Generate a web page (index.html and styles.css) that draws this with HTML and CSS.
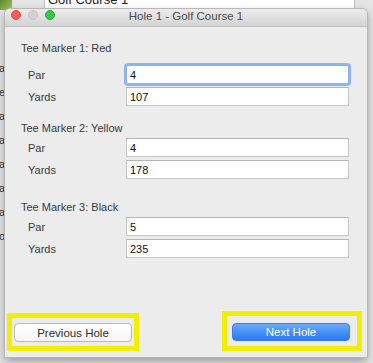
FILE: index.html
```html
<!DOCTYPE html>
<html lang="en">
<head>
  <meta charset="UTF-8" />
  <title>Hole 1 - Golf Course 1</title>
  <link rel="stylesheet" href="styles.css">
</head>
<body>
  <div class="desktop">
    <!-- window behind -->
    <div class="back-thumb"></div>
    <div class="back-field">Golf Course 1</div>
    <div class="back-labels">
      <span>a</span><span>e</span><span>a</span><span>a</span><span>la</span><span>a</span><span>a</span><span>o</span>
    </div>

    <!-- dialog -->
    <div class="window">
      <div class="titlebar">
        <div class="lights">
          <span class="light red"></span>
          <span class="light grey"></span>
          <span class="light green"></span>
        </div>
        <div class="title">Hole 1 - Golf Course 1</div>
      </div>

      <div class="content">
        <div class="group first">
          <div class="group-title">Tee Marker 1: Red</div>
          <div class="row">
            <span class="label">Par</span>
            <input class="field focused" type="text" value="4" />
          </div>
          <div class="row">
            <span class="label">Yards</span>
            <input class="field" type="text" value="107" />
          </div>
        </div>

        <div class="group second">
          <div class="group-title">Tee Marker 2: Yellow</div>
          <div class="row">
            <span class="label">Par</span>
            <input class="field" type="text" value="4" />
          </div>
          <div class="row">
            <span class="label">Yards</span>
            <input class="field" type="text" value="178" />
          </div>
        </div>

        <div class="group third">
          <div class="group-title">Tee Marker 3: Black</div>
          <div class="row">
            <span class="label">Par</span>
            <input class="field" type="text" value="5" />
          </div>
          <div class="row">
            <span class="label">Yards</span>
            <input class="field" type="text" value="235" />
          </div>
        </div>

        <div class="actions">
          <div class="highlight left">
            <button class="btn">Previous Hole</button>
          </div>
          <div class="highlight right">
            <button class="btn primary">Next Hole</button>
          </div>
        </div>
      </div>
    </div>
  </div>
</body>
</html>
```

FILE: styles.css
```css
body {
  margin: 0;
  background-color: #9c9c9c;
  font-family: 'Liberation Sans', Arial, sans-serif;
  font-size: 11px;
  color: #333;
  overflow: hidden;
}

.desktop {
  position: relative;
  width: 373px;
  height: 363px;
  background-color: #e4e4e4;
  overflow: hidden;
}

/* window in the back */
.back-thumb {
  position: absolute;
  left: 0;
  top: 0;
  width: 12px;
  height: 10px;
  background: linear-gradient(135deg, #5b8a2e, #a7c45a);
}

.back-field {
  position: absolute;
  left: 44px;
  top: -9px;
  width: 306px;
  height: 16px;
  padding-left: 3px;
  background-color: #fff;
  border: 1px solid #bdbdbd;
  font-size: 13px;
  line-height: 16px;
  color: #222;
}

.back-labels {
  position: absolute;
  left: -4px;
  top: 62px;
  width: 9px;
  display: flex;
  flex-direction: column;
  gap: 11px;
  font-size: 11px;
  line-height: 13px;
  color: #333;
  text-align: right;
}

/* dialog window */
.window {
  position: absolute;
  left: 5px;
  top: 9px;
  width: 362px;
  height: 348px;
  background-color: #ececec;
  border-radius: 5px 5px 0 0;
  box-shadow: 0 0 0 1px #b8b8b8, 0 4px 10px rgba(0, 0, 0, 0.35);
  display: flex;
  flex-direction: column;
  overflow: hidden;
}

.titlebar {
  position: relative;
  height: 17px;
  flex-shrink: 0;
  background: linear-gradient(#ececec, #d3d3d3);
  border-bottom: 1px solid #bcbcbc;
  display: flex;
  align-items: center;
  justify-content: center;
}

.lights {
  position: absolute;
  left: 6px;
  top: 1px;
  display: flex;
  gap: 7px;
}

.light {
  width: 10px;
  height: 10px;
  border-radius: 50%;
  box-sizing: border-box;
}
.light.red {
  background-color: #fc5b57;
  border: 1px solid #e2463f;
}
.light.grey {
  background-color: #d2d2d2;
  border: 1px solid #c4c4c4;
}
.light.green {
  background-color: #34c748;
  border: 1px solid #27aa35;
}

.title {
  font-size: 11.5px;
  color: #4a4a4a;
  margin-top: -3px;
}

.content {
  flex-grow: 1;
  display: flex;
  flex-direction: column;
  padding: 14px 5px 6px 2px;
}

.group {
  display: flex;
  flex-direction: column;
  gap: 3px;
}
.group.second {
  margin-top: 15px;
}
.group.third {
  margin-top: 21px;
}

.group-title {
  margin-left: 14px;
  line-height: 14px;
  color: #3a3a3a;
}
.group.first .group-title {
  margin-bottom: 7px;
}

.row {
  display: flex;
  align-items: center;
  height: 19px;
}

.label {
  width: 98px;
  margin-left: 21px;
  color: #3a3a3a;
}

.field {
  width: 223px;
  height: 19px;
  box-sizing: border-box;
  margin: 0;
  padding: 0 3px;
  border: 1px solid #c6c6c6;
  border-top-color: #b4b4b4;
  border-radius: 0;
  background-color: #fff;
  font-family: 'Liberation Sans', Arial, sans-serif;
  font-size: 11px;
  color: #111;
  outline: none;
}
.field.focused {
  border-color: #8fb2ea;
  box-shadow: 0 0 0 2px #8db3f0;
  border-radius: 2px;
}

/* buttons */
.actions {
  margin-top: auto;
  display: flex;
  justify-content: space-between;
  align-items: flex-end;
}

.highlight {
  border: 5px solid #f3ee00;
  display: flex;
  align-items: flex-start;
}
.highlight.left {
  width: 118px;
  height: 23px;
  padding: 5px 2px 0 2px;
}
.highlight.right {
  width: 125px;
  height: 23px;
  padding: 7px 0 0 5px;
}

.btn {
  width: 118px;
  height: 19px;
  flex-shrink: 0;
  margin: 0;
  padding: 0;
  border: 1px solid #b9b9b9;
  border-radius: 4px;
  background: linear-gradient(#ffffff, #f6f6f6);
  font-family: 'Liberation Sans', Arial, sans-serif;
  font-size: 11.5px;
  color: #2e2e2e;
  cursor: pointer;
}
.btn.primary {
  height: 18px;
  border-color: #3b7fe8;
  background: linear-gradient(#69aafa, #2a78f3);
  color: #fff;
}
```
